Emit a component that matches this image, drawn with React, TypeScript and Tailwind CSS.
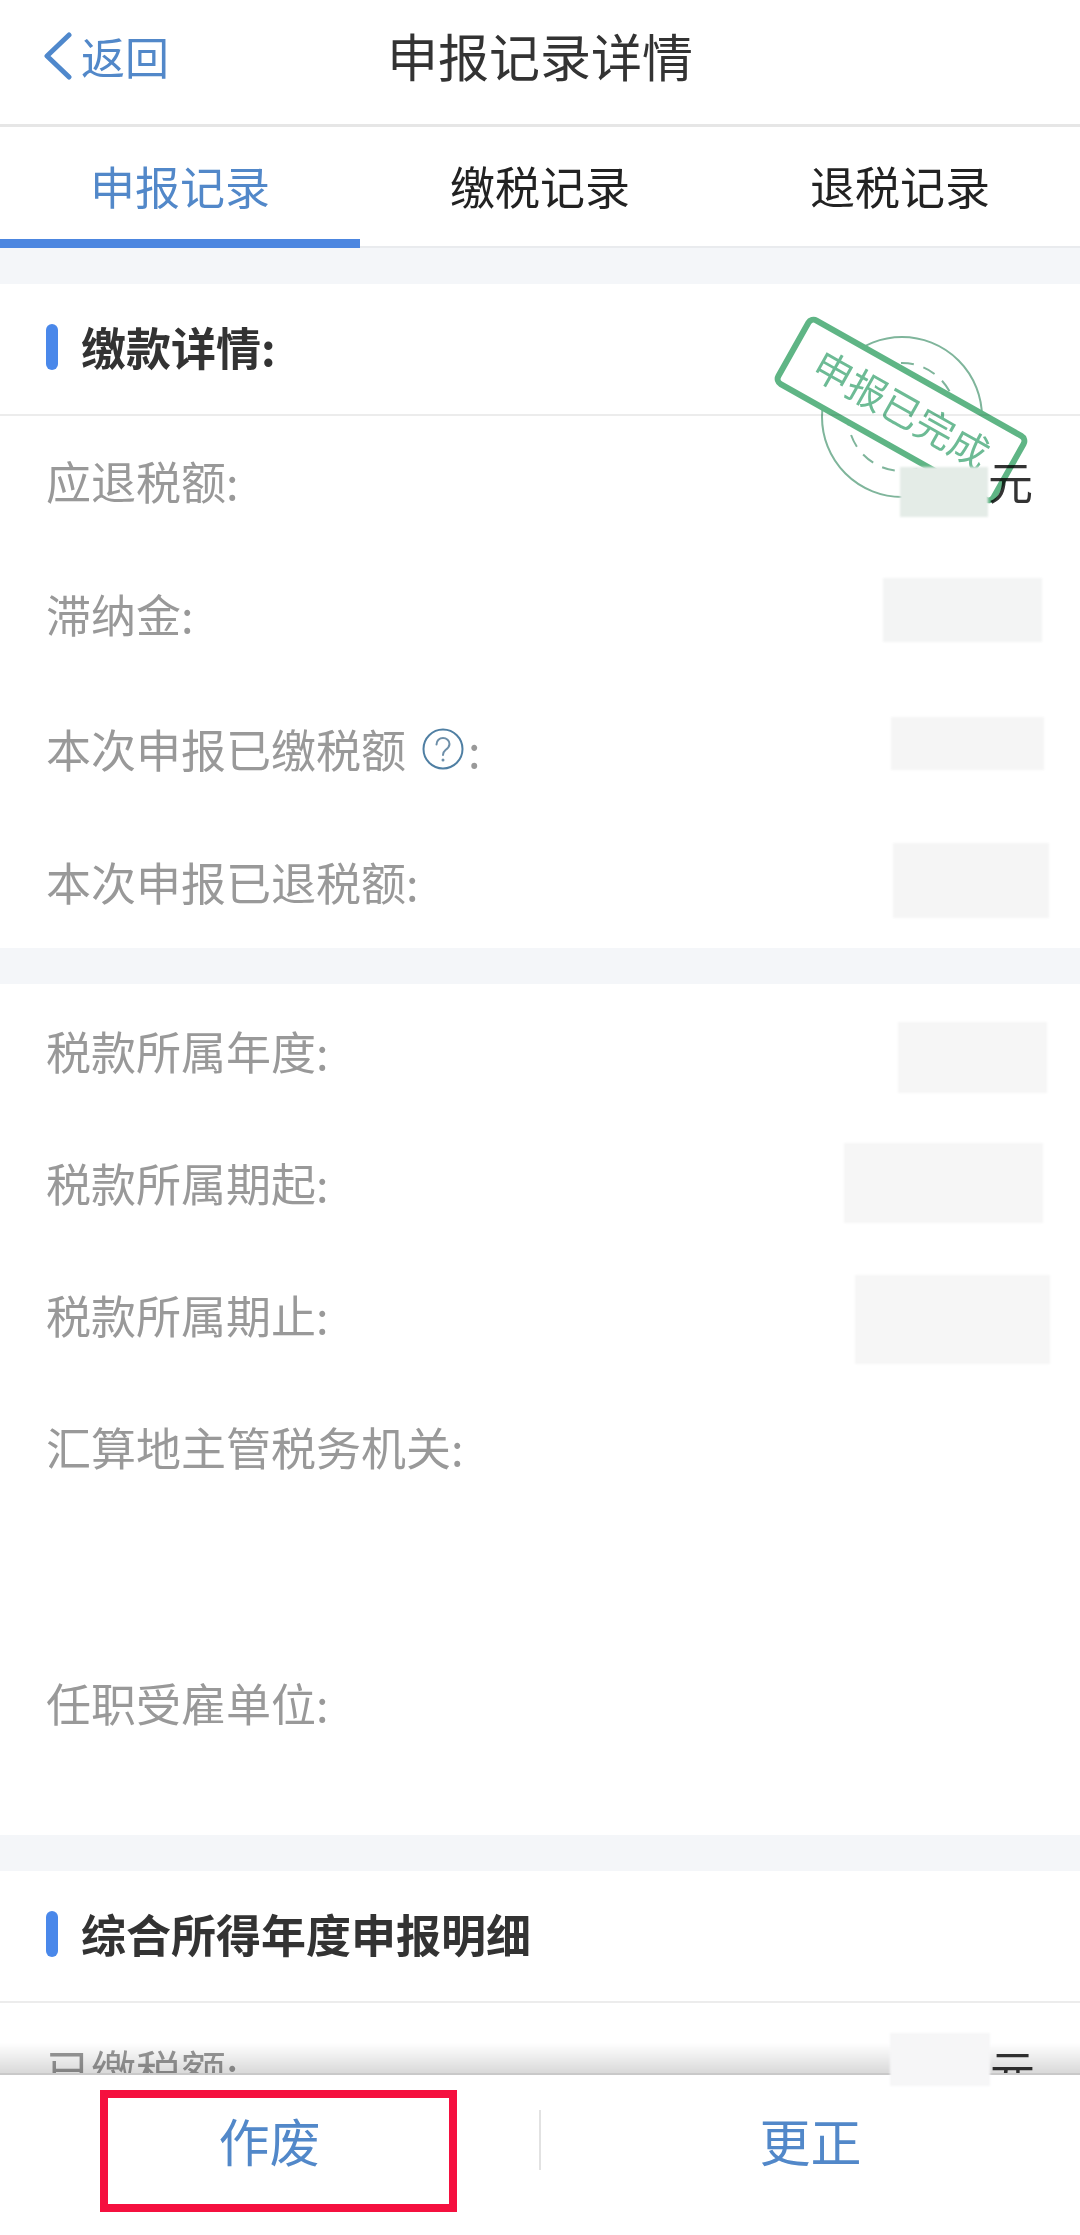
const FONT = "font-['Noto_Sans_CJK_SC','Noto_Sans',sans-serif]";

function SectionTitle({ title }: { title: string }) {
  return (
    <div className="flex h-[132px] items-center border-b-2 border-[#ececec] pl-[46px]">
      <div className="-mt-[4px] h-[46px] w-[12px] rounded-full bg-[#4a88ea]" />
      <div className="-mt-[6px] ml-[23px] text-[45px] leading-none font-bold text-[#333333]">{title}</div>
    </div>
  );
}

function Band() {
  return <div className="h-[36px] bg-[#f4f6f9]" />;
}

// masked amount at the right edge of a row
function Mask({ className }: { className: string }) {
  return <div className={`ml-auto blur-[1px] ${className}`} />;
}

function Row({ height, children }: { height: string; children: React.ReactNode }) {
  return <div className={`flex items-center pl-[46px] text-[45px] leading-none text-[#999999] ${height}`}>{children}</div>;
}

function Stamp() {
  return (
    <svg
      className="absolute top-[300px] left-[760px] mix-blend-multiply"
      width="280"
      height="220"
      viewBox="0 0 280 220"
      fill="none"
    >
      <circle cx="142" cy="117" r="80" stroke="#7fb59b" strokeWidth="2" />
      <circle cx="142" cy="117" r="54" stroke="#7fb59b" strokeWidth="2" strokeDasharray="13 10" />
      <g transform="rotate(29.4 141 110)">
        <rect x="17.5" y="73.5" width="247" height="73" rx="6" fill="#ffffff" stroke="#5fb585" strokeWidth="6" />
        <text x="141" y="124" textAnchor="middle" fontSize="39" fill="#6dbb95" fontFamily="'Noto Sans CJK SC', sans-serif">
          申报已完成
        </text>
      </g>
    </svg>
  );
}

function HelpIcon() {
  return (
    <svg className="mr-[4px] ml-[16px]" width="42" height="42" viewBox="0 0 42 42" fill="none">
      <circle cx="21" cy="21" r="19.5" stroke="#4f7fa3" strokeWidth="2" />
      <path
        d="M14.5 16.5c0-4 3-6.500 6.500-6.500s6.500 2.500 6.500 6c0 3-2 4.500-4 6-1.500 1.200-2.500 2.300-2.500 5"
        stroke="#6d8ea8"
        strokeWidth="2"
        strokeLinecap="round"
      />
      <circle cx="21" cy="32" r="1.5" fill="#6d8ea8" />
    </svg>
  );
}

export default function App() {
  return (
    <div className={`relative h-[2235px] w-[1080px] overflow-hidden bg-white ${FONT}`}>
      {/* nav bar */}
      <div className="grid h-[127px] grid-cols-3 items-center border-b-[3px] border-[#e6e6e6] pb-[13px]">
        <div className="flex items-center pl-[44px] text-[#5288c9]">
          <svg width="28" height="48" viewBox="0 0 28 48" fill="none">
            <path d="M25 3 3 24l22 21" stroke="#4f88cc" strokeWidth="5" strokeLinecap="round" strokeLinejoin="round" />
          </svg>
          <span className="ml-[9px] text-[44px] leading-none">返回</span>
        </div>
        <div className="text-center text-[51px] leading-none whitespace-nowrap text-[#333333]">申报记录详情</div>
      </div>

      {/* tabs */}
      <div className="grid h-[121px] grid-cols-3 border-b-2 border-[#e9ebee] text-[45px] leading-none text-[#222222]">
        <div className="relative flex items-center justify-center pb-[3px] text-[#5288c9]">
          申报记录
          <div className="absolute right-0 -bottom-[2px] left-0 h-[9px] bg-[#4c86e0]" />
        </div>
        <div className="flex items-center justify-center pb-[3px]">缴税记录</div>
        <div className="flex items-center justify-center pb-[3px]">退税记录</div>
      </div>

      <Band />

      <SectionTitle title="缴款详情:" />
      <Row height="h-[133px] pb-[5px]">
        应退税额:
        <Mask className="relative z-[5] mt-[24px] h-[50px] w-[88px] bg-[#e4ece7]" />
        <span className="mr-[47px] text-[#333333]">元</span>
      </Row>
      <Row height="h-[133px] pb-[5px]">
        滞纳金:
        <Mask className="mr-[38px] -mt-[6px] h-[64px] w-[159px] bg-[#f3f4f4]" />
      </Row>
      <Row height="h-[133px]">
        本次申报已缴税额
        <HelpIcon />:
        <Mask className="mr-[36px] -mt-[10px] h-[53px] w-[153px] bg-[#f5f5f5]" />
      </Row>
      <Row height="h-[133px]">
        本次申报已退税额:
        <Mask className="mr-[31px] -mt-[2px] h-[75px] w-[156px] bg-[#f5f5f5]" />
      </Row>

      <Band />

      <Row height="h-[132px]">
        税款所属年度:
        <Mask className="mr-[33px] mt-[15px] h-[71px] w-[149px] bg-[#f6f6f6]" />
      </Row>
      <Row height="h-[132px]">
        税款所属期起:
        <Mask className="mr-[37px] mt-[2px] h-[80px] w-[199px] bg-[#f6f6f6]" />
      </Row>
      <Row height="h-[132px]">
        税款所属期止:
        <Mask className="mr-[30px] mt-[11px] h-[89px] w-[195px] bg-[#f6f6f6]" />
      </Row>
      <div className="h-[256px] pt-[44px] pl-[46px] text-[45px] leading-none text-[#999999]">汇算地主管税务机关:</div>
      <div className="h-[199px] pt-[44px] pl-[46px] text-[45px] leading-none text-[#999999]">任职受雇单位:</div>

      <Band />

      <SectionTitle title="综合所得年度申报明细" />
      <Row height="h-[132px]">
        已缴税额:
        <Mask className="relative z-20 -mt-[20px] h-[53px] w-[100px] bg-[#f6f6f7]" />
        <span className="mr-[45px] text-[#333333]">元</span>
      </Row>

      <Stamp />

      {/* bottom bar */}
      <div className="absolute right-0 bottom-0 left-0 z-10 h-[162px] border-t-2 border-[#c9c9c9] bg-white">
        <div className="absolute right-0 -top-[32px] left-0 h-[30px] bg-gradient-to-b from-transparent to-[#00000026]" />
        <div className="flex h-full items-center pb-[30px] text-[51px] leading-none text-[#5288c9]">
          <div className="flex-1 text-center">作废</div>
          <div className="h-[60px] w-[2px] bg-[#e2e2e2]" />
          <div className="flex-1 text-center">更正</div>
        </div>
        <div className="absolute top-[15px] left-[100px] h-[122px] w-[357px] border-[8px] border-[#f5103f]" />
      </div>
    </div>
  );
}
